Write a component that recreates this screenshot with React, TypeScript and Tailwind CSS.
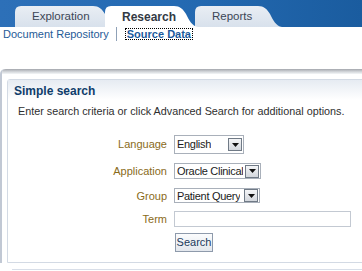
import React from 'react';

const font = { fontFamily: '"Liberation Sans", Arial, sans-serif' };

function TabShape({ w, fill }: { w: number; fill: string }) {
  const d = `M0,21 L0,6 Q0,0 6,0 L${w - 24},0 C${w - 18},0 ${w - 15},3 ${w - 12},8 C${w - 9},14 ${w - 6},20 ${w},21 Z`;
  return (
    <svg className="absolute inset-0" width={w} height={21} viewBox={`0 0 ${w} 21`}>
      <defs>
        <linearGradient id="tabg" x1="0" y1="0" x2="0" y2="1">
          <stop offset="0" stopColor="#e9eef4" />
          <stop offset="1" stopColor="#d8e1ec" />
        </linearGradient>
      </defs>
      <path d={d} fill={fill} />
    </svg>
  );
}

function Tab({ label, w, active, className }: { label: string; w: number; active?: boolean; className?: string }) {
  return (
    <div className={`relative h-[21px] shrink-0 ${className ?? ''}`} style={{ width: w }}>
      <TabShape w={w} fill={active ? '#ffffff' : 'url(#tabg)'} />
      <span
        className={`relative flex h-full items-center pl-[17px] pt-[1px] ${
          active ? 'text-[12px] font-bold text-[#333a44]' : 'text-[11.5px] text-[#3c4656]'
        }`}
      >
        {label}
      </span>
    </div>
  );
}

function Select({ value, w, h }: { value: string; w: number; h: number }) {
  return (
    <div
      className="flex items-center justify-between border border-[#a9b0ba] bg-white pl-[2px] pr-[1px] text-[11px] text-[#1b1b1b]"
      style={{ width: w, height: h }}
    >
      <span className="overflow-hidden whitespace-nowrap tracking-[-0.3px]">{value}</span>
      <span className="flex h-[13px] w-[14px] shrink-0 items-center justify-center border border-[#707a86] bg-gradient-to-b from-[#f4f5f7] to-[#d3d7dd]">
        <svg width="7" height="4" viewBox="0 0 7 4">
          <path d="M0,0 L7,0 L3.5,4 Z" fill="#111" />
        </svg>
      </span>
    </div>
  );
}

function Row({ label, children, className }: { label: string; children: React.ReactNode; className?: string }) {
  return (
    <div className={`flex items-center ${className ?? ''}`}>
      <span className="w-[160px] pr-[1px] text-right text-[11px] text-[#8a6b1a]">{label}</span>
      <div className="ml-[6px] flex">{children}</div>
    </div>
  );
}

export default function App() {
  return (
    <div className="h-[271px] w-[362px] overflow-hidden bg-white" style={font}>
      <div className="flex h-[27px] items-end bg-gradient-to-r from-[#2d70b8] via-[#246ab2] to-[#1a5c9f] pl-[15px]">
        <Tab label="Exploration" w={102} className="z-10" />
        <Tab label="Research" w={93} active className="z-20 -ml-[12px]" />
        <Tab label="Reports" w={87} className="z-10 -ml-[3px]" />
      </div>

      <div className="flex h-[14px] items-center text-[11px]">
        <span className="pl-[3px] text-[#1f5b97]">Document Repository</span>
        <span className="ml-[7px] h-[14px] w-px bg-[#8fa1b7]" />
        <span className="ml-[8px] border border-dotted border-black px-[1px] font-bold leading-[10px] text-[#1b5a9c]">
          Source Data
        </span>
      </div>

      <div className="mt-[28px] h-[194px] rounded-tl-[5px] border-l-[2px] border-[#c1c8d4]">
        <div className="h-[5px] rounded-tl-[4px] bg-gradient-to-b from-[#a4a7ad] via-[#cfd2d6] to-[#f4f6f8]" />
        <div className="ml-[5px] mt-[5px] h-[184px] w-[420px] rounded-tl-[3px] border border-[#d3dae4]">
          <div className="h-[20px] bg-gradient-to-b from-[#e6ebf2] to-white pl-[6px] pt-[4px] text-[12px] font-bold leading-[14px] text-[#0f3d6b]">
            Simple search
          </div>
          <div className="pl-[10px] pt-[5px] text-[10.8px] leading-[13px] text-[#2f2f2f]">
            Enter search criteria or click Advanced Search for additional options.
          </div>

          <div className="mt-[17px] flex flex-col">
            <Row label="Language">
              <Select value="English" w={70} h={19} />
            </Row>
            <Row label="Application" className="mt-[9px]">
              <Select value="Oracle Clinical" w={87} h={16} />
            </Row>
            <Row label="Group" className="mt-[8px]">
              <Select value="Patient Query" w={86} h={15} />
            </Row>
            <Row label="Term" className="mt-[7px]">
              <div className="h-[16px] w-[177px] border border-[#c3c9d2] bg-white" />
            </Row>
            <Row label="" className="mt-[5px]">
              <button className="ml-[1px] h-[19px] w-[38px] border border-[#8e9aab] bg-gradient-to-b from-[#fbfcfd] to-[#e3e7ed] text-[11px] text-[#1c3a5c]">
                Search
              </button>
            </Row>
          </div>
        </div>
      </div>
      <div className="ml-[12px] mt-[6px] h-px w-[360px] bg-[#d8dee8]" />
    </div>
  );
}
